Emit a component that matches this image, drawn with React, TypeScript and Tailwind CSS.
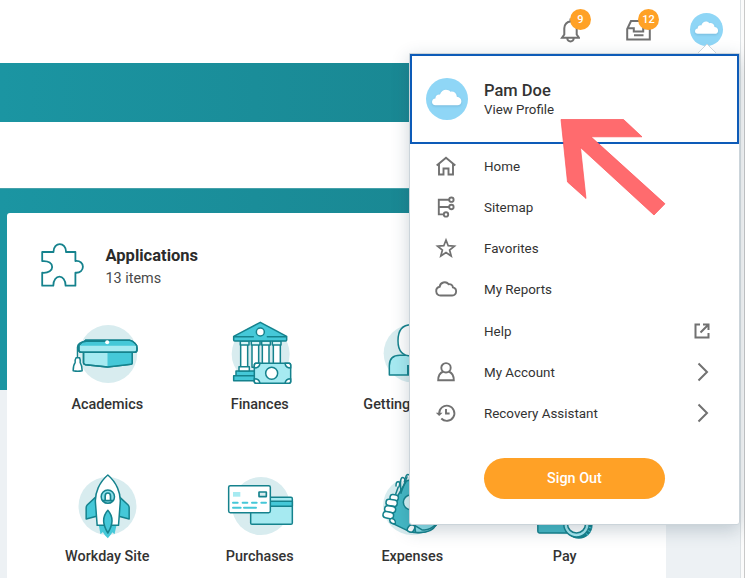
import type { ReactNode } from 'react';

const CLOUD = 'M6.5 18.5h11.7a4.1 4.1 0 0 0 .7-8.1 3.6 3.6 0 0 0-4.3-3.2A5 5 0 0 0 5.7 9.8a4.4 4.4 0 0 0 .8 8.7Z';

function Avatar({ className }: { className: string }) {
  return (
    <span className={`flex shrink-0 items-center justify-center rounded-full bg-[#8fd6f6] ${className}`}>
      <svg viewBox="0 0 30 17" className="-mt-[3px] w-[70%] drop-shadow-[0_1px_1px_rgba(60,120,160,0.3)]" fill="#fff">
        <path d="M3.500 16.500C1.300 16.500 0 15.200 0 13.200c0-2.100 1.400-3.400 3.400-3.600C3.500 6.900 5.600 5.300 8.100 5.700 9.200 2.500 11.600.8 14.200.8c2 0 3.500.7 4.600 2 3.200-.7 6.300 1.300 6.600 5 2.800.2 4.600 2.200 4.600 4.600 0 2.600-1.600 4.100-4 4.100Z" />
      </svg>
    </span>
  );
}

function Badge({ children }: { children: ReactNode }) {
  return (
    <span className="absolute -top-[9px] left-[10px] flex size-[21px] items-center justify-center rounded-full bg-[#ffa126] pt-px text-[11px] font-medium text-white">
      {children}
    </span>
  );
}

function MenuIcon({ children }: { children?: ReactNode }) {
  return (
    <svg viewBox="0 0 24 24" className="mb-px size-6 shrink-0" fill="none" stroke="#717171" strokeWidth="1.9">
      {children}
    </svg>
  );
}

const chevron = (
  <svg viewBox="0 0 12 20" className="mr-[2px] h-5 w-3" fill="none" stroke="#717171" strokeWidth="2">
    <path d="m1.500 1.500 8.500 8.500-8.500 8.500" />
  </svg>
);

const menuItems: { label: string; icon?: ReactNode; end?: ReactNode }[] = [
  { label: 'Home', icon: <><path d="M2.700 11.500 12 3.700l9.300 7.800" /><path d="M5 10v10.500h4.500v-6h5v6H19V10" /></> },
  {
    label: 'Sitemap',
    icon: <><path d="M15 4.700H4.800v14.700H10M4.800 12H15" /><circle cx="17.400" cy="4.700" r="2.200" /><circle cx="17.400" cy="12" r="2.200" /><circle cx="12" cy="19.400" r="2.200" /></>,
  },
  { label: 'Favorites', icon: <path d="m12 4 2.200 5.700 6.200.4-4.800 3.900 1.600 6-5.200-3.400-5.200 3.400 1.600-6-4.800-3.900 6.200-.4Z" strokeWidth="1.700" /> },
  { label: 'My Reports', icon: <path d={CLOUD} /> },
  {
    label: 'Help',
    end: (
      <svg viewBox="0 0 16 16" className="mr-px mb-px size-4" fill="none" stroke="#717171" strokeWidth="2">
        <path d="M6 1.500H1.500v13h13V10M9 1.500h5.500V7M14.300 1.700 6.500 9.500" />
      </svg>
    ),
  },
  { label: 'My Account', icon: <><circle cx="12" cy="7.800" r="4.700" /><path d="M9.200 11.500C6 12.800 4.200 16 4.200 20.300h15.600c0-4.300-1.800-7.500-5-8.800" /></>, end: chevron },
  {
    label: 'Recovery Assistant',
    icon: <><path d="M5.200 12.600a7.600 7.600 0 1 1 2.100 4.900" /><path d="M12 8v4.500h3.600" /><path d="m1.800 11.800 3.400 3.300 3.400-3.300Z" fill="#717171" stroke="none" /></>,
    end: chevron,
  },
];

/* Tile artwork uses a 216-unit square, three units to a pixel. */
function Art({ box, cx, cy, children }: { box: string; cx: number; cy: number; children: ReactNode }) {
  return (
    <svg viewBox={box} className="mr-[1.5px] size-[72px] shrink-0" fill="none" stroke="#15828d" strokeWidth="4.500" strokeLinejoin="round" strokeLinecap="round">
      <circle cx={cx} cy={cy} r="87" fill="#d8ecef" stroke="none" />
      {children}
    </svg>
  );
}

const apps: { label: string; startsRow?: boolean; art: ReactNode }[] = [
  {
    label: 'Academics',
    art: (
      <Art box="34.5 24 216 216" cx={146} cy={132}>
        <path d="M72 125h146v34q0 4-4 4l-70 8-66-7q-6-1-6-5Z" fill="#a6eaf1" />
        <path d="M144 126h74v33q0 4-4 4l-70 8Z" fill="#45c8d8" stroke="none" />
        <path d="M72 125h146v34q0 4-4 4l-70 8-66-7q-6-1-6-5Z" />
        <path d="M78 91h132q8 1 16 9l6 7v12q0 8-8 8H66q-8 0-8-8v-13Z" fill="#a6eaf1" />
        <path d="M80 92h132q8 2 14 12l3 3H62q6-12 18-15Z" fill="#45c8d8" stroke="none" />
        <path d="M142 94H80q-26 3-26 18v31M78 91h132q8 1 16 9 7 7 7 14v5q0 8-8 8H66q-8 0-8-8v-13" />
        <path d="M50 143h10q4 9 2 15 6 9 6 24-13 3-27 0 0-16 6-24-2-7 3-15Z" fill="#fff" />
        <circle cx="143" cy="97" r="6" fill="#fff" stroke="none" />
      </Art>
    ),
  },
  {
    label: 'Finances',
    art: (
      <Art box="12 24 216 216" cx={122} cy={132}>
        <path d="M48 183h144v14H48zM41 197h156v15H41Z" fill="#45c8d8" />
        <path d="M62 96h21v76H62zM96 96h20v76H96zM127 96h20v76h-20zM160 96h21v76h-21Z" fill="#fff" />
        <path d="M57 170h31v13H57z" fill="#fff" />
        <path d="M61 93h26v12H61zM94 93h26v12H94zM125 93h26v12h-26zM157 93h26v12h-26Z" fill="#d8f4f7" />
        <path d="M121 37 200 79v11q0 3-3 3H44q-3 0-3-3V79Z" fill="#45c8d8" />
        <path d="M43 80h57M142 80h56" />
        <circle cx="121" cy="66" r="12" fill="#fff" />
        <rect x="103" y="160" width="109" height="60" rx="4" fill="#a6eaf1" />
        <path d="M103 174q15 0 17-14h-13l-4 4ZM195 160q2 14 17 14v-10l-4-4ZM103 206q15 0 17 14h-13l-4-4ZM195 220q2-14 17-14v10l-4 4Z" fill="#fff" />
        <circle cx="155" cy="190" r="18" fill="#fff" />
      </Art>
    ),
  },
  {
    label: 'Getting Started',
    art: (
      <Art box="78 24 216 216" cx={188} cy={130}>
        <path d="M118 195v-28q0-31 32-31h75q31 0 31 31v28Z" fill="#a6eaf1" />
        <path d="M171 165h15v30h-15z" fill="#15828d" stroke="none" />
        <path d="M184 44c-29 0-40 21-40 48s12 46 41 46 41-21 41-47-13-47-42-47Z" fill="#fff" />
      </Art>
    ),
  },
  {
    label: 'Workday Site',
    startsRow: true,
    art: (
      <Art box="34.5 15 216 216" cx={144} cy={123}>
        <path d="m118 181 5 27 7-7 6 10 9 9 8-10 6-8 6 6 6-27Z" fill="#45c8d8" stroke="none" />
        <path d="m110 95-27 25q-3 3-3 8v34l34-9ZM179 95l27 25q3 3 3 8v34l-34-9Z" fill="#45c8d8" />
        <path d="M145 30c-25 21-40 54-37 85l5 66h64l5-66c3-31-12-64-37-85Z" fill="#fff" />
        <circle cx="145" cy="95" r="20" fill="#8be0ea" />
        <path d="M131 107h28M137 107v-14q0-9 8-9t8 9v14" fill="#fff" strokeWidth="5" />
        <path d="M145 136q-25 28 0 68 25-40 0-68Z" fill="#45c8d8" />
      </Art>
    ),
  },
  {
    label: 'Purchases',
    art: (
      <Art box="27 15 216 216" cx={138} cy={123}>
        <rect x="107" y="97" width="125" height="81" rx="4" fill="#a6eaf1" />
        <path d="M107 109h125v15H107z" fill="#45c8d8" />
        <rect x="41" y="62" width="125" height="81" rx="5" fill="#fff" />
        <path d="M54 81h22v14H54z" fill="#a6eaf1" stroke="none" />
        <rect x="132" y="81" width="22" height="14" rx="1" fill="#d8ecef" strokeWidth="5" />
        <path d="M54 113h14M83 113h14M111 113h14M139 113h14M54 128h23M87 128h36" stroke="#45c8d8" strokeWidth="6" />
      </Art>
    ),
  },
  {
    label: 'Expenses',
    art: (
      <Art box="33 30 216 216" cx={141} cy={138}>
        <path d="m92 118 32-55 60-18 30 150q-30 32-80 20l-58-28Z" fill="#45b9c6" />
        <path d="m90 108 16-44 2 36M108 98l18-48" />
        <circle cx="137" cy="127" r="22" fill="#d8f4f7" />
        <path d="M148 193h66q-15 29-62 24Z" fill="#8be0ea" />
        <path d="m145 194 25 15q22 5 43-16" />
        <rect x="75" y="104" width="25" height="18" rx="8" fill="#fff" transform="rotate(8 87 113)" />
        <rect x="63" y="119" width="34" height="19" rx="9" fill="#fff" transform="rotate(8 80 128)" />
        <rect x="59" y="138" width="33" height="19" rx="9" fill="#fff" transform="rotate(8 75 147)" />
        <rect x="54" y="156" width="32" height="19" rx="9" fill="#fff" transform="rotate(12 70 165)" />
        <path d="M74 180q4-8 13-2 6 6 4 13-14 2-17-11ZM126 211q3-15 14-17 8 1 10 6-2 14-11 17-7 0-13-6Z" fill="#fff" />
        <path d="M93 78q0-14 7-13 7 2 2 15M107 65q0-14 8-12 7 3 3 12M122 54q1-12 9-10" fill="#fff" />
      </Art>
    ),
  },
  {
    label: 'Pay',
    art: (
      <Art box="25.5 90 216 216" cx={133.5} cy={196}>
        <path d="M52 170h130v109H57q-5 0-5-5Z" fill="#45b9c6" />
        <circle cx="175" cy="255" r="39" fill="#15828d" />
        <circle cx="168" cy="253" r="38" fill="#a6eaf1" />
        <circle cx="168" cy="252" r="27" fill="#fff" />
        <path d="m206 262 6 2M203 272l6 3M197 281l5 4" stroke="#45c8d8" strokeWidth="3" />
      </Art>
    ),
  },
];

export default function App() {
  return (
    <div className="relative flex h-[578px] w-[745px] overflow-hidden bg-white font-[Roboto,sans-serif] text-[#333]">
      <div className="flex h-full w-[740px] flex-col overflow-hidden bg-[#edf1f4]">
        <header className="flex h-[63px] shrink-0 items-start justify-end bg-white pr-[17px]">
          <button className="relative mt-[18px] mr-[46px] size-5" aria-label="Notifications">
            <svg viewBox="0 0 20 25" className="h-[25px] w-5" fill="none" stroke="#717171" strokeWidth="2">
              <path d="M2 19.800h17l-2.300-3.300v-6.300a6.200 6.700 0 0 0-12.400 0v6.300ZM10.500.5v3M7.300 20.500a3.200 3 0 0 0 6.400 0" />
            </svg>
            <Badge>9</Badge>
          </button>
          <button className="relative mt-[18px] mr-[39px] h-6 w-[25px]" aria-label="Inbox">
            <svg viewBox="0 0 25 24" className="h-6 w-[25px]" fill="none" stroke="#717171" strokeWidth="2">
              <path d="M1.200 21.500V11L5 3h15l3.800 8v10.500ZM1.200 10.200h6.600v3.300h9.400v-3.300h6.600M8 17.200h9.500" />
            </svg>
            <span className="absolute top-0 left-[2px]"><Badge>12</Badge></span>
          </button>
          <Avatar className="mt-[13px] size-[33px]" />
        </header>
        <div className="h-[59px] shrink-0 bg-linear-to-r from-[#1b95a2] to-[#187e88]" />
        <div className="h-[66px] shrink-0 bg-white" />
        <main className="h-[202px] shrink-0 border-t border-[#46a1aa] bg-linear-to-r from-[#1b95a2] to-[#187e88] pt-6 pl-[7px]">
          <section className="h-[380px] w-[659px] rounded-[3px] bg-white px-[24.5px]">
            <div className="flex h-[105px] items-start pt-[29px] pl-[8px]">
              <svg viewBox="0 0 44 46" className="h-[46px] w-11 shrink-0" fill="none" stroke="#15828d" strokeWidth="1.800" strokeLinejoin="round">
                <path d="M2.200 10h11.300c-.2-10.600 12.800-10.600 12.500 0h9.400v9c10-1 10 12.500 0 11.700V43.700h-9.800c0-12-12.300-12-12.300 0H2.200V30.700c13.300 1.200 13.300-12.800 0-11.500Z" />
              </svg>
              <div className="pt-[4px] pl-[22px]">
                <h2 className="text-[16.5px] leading-5 font-bold text-[#2b2b2b]">Applications</h2>
                <p className="pt-[3px] text-[14.4px] leading-5 text-[#494949]">13 items</p>
              </div>
            </div>
            <div className="grid grid-cols-4">
              {apps.map((app) => (
                <div key={app.label} className={`flex h-[152px] flex-col items-center ${app.startsRow ? 'col-start-1' : ''}`}>
                  {app.art}
                  <span className="mr-px pt-[5px] text-[14.400px] leading-5 font-medium whitespace-nowrap">{app.label}</span>
                </div>
              ))}
            </div>
          </section>
        </main>
      </div>
      <div className="flex-1 border-x border-l-[#dce1e4] border-r-[#c9c9c9] bg-[#fbfbfb]" />

      <div className="absolute top-[53px] left-[409px] flex h-[472px] w-[331px] flex-col rounded-b-[3px] border border-[#cbd4da] bg-white shadow-[0_5px_18px_rgba(35,65,85,0.23)]">
        <button className="flex h-[90px] w-[329px] shrink-0 items-center border-2 border-[#0d5bb8] bg-white pl-[14px] text-left">
          <Avatar className="size-[42px]" />
          <span className="flex flex-col pt-px pl-4">
            <span className="text-[16.500px] leading-5 font-medium">Pam Doe</span>
            <span className="text-[13.300px] leading-[18px]">View Profile</span>
          </span>
        </button>
        <nav className="flex flex-col pt-[2px]">
          {menuItems.map((item) => (
            <button key={item.label} className="flex h-[41.15px] items-center pr-[28px] pl-[24px] text-left">
              <MenuIcon>{item.icon}</MenuIcon>
              <span className="flex-1 pt-px pl-[26px] text-[13.400px]">{item.label}</span>
              {item.end}
            </button>
          ))}
        </nav>
        <button className="mt-[24px] ml-[74px] h-[41px] w-[181px] rounded-full bg-[#ffa126] pt-px text-[14.400px] font-medium text-white">Sign Out</button>
      </div>

      <svg viewBox="0 0 18 9" className="absolute top-[44px] left-[698px] h-[9px] w-[18px]">
        <path d="m0 9 9-9 9 9Z" fill="#fff" />
        <path d="m0 9 9-9 9 9" fill="none" stroke="#cbd4da" />
      </svg>
      <svg viewBox="0 0 106 98" className="absolute top-[118px] left-[560px] h-[98px] w-[106px]">
        <path d="M1 1.500h62.500L82 18.800H31l74 67L94 97 20.500 29.500l5.500 51L7.500 64Z" fill="#ff6b6e" stroke="#fb5559" strokeWidth=".7" />
      </svg>
    </div>
  );
}
